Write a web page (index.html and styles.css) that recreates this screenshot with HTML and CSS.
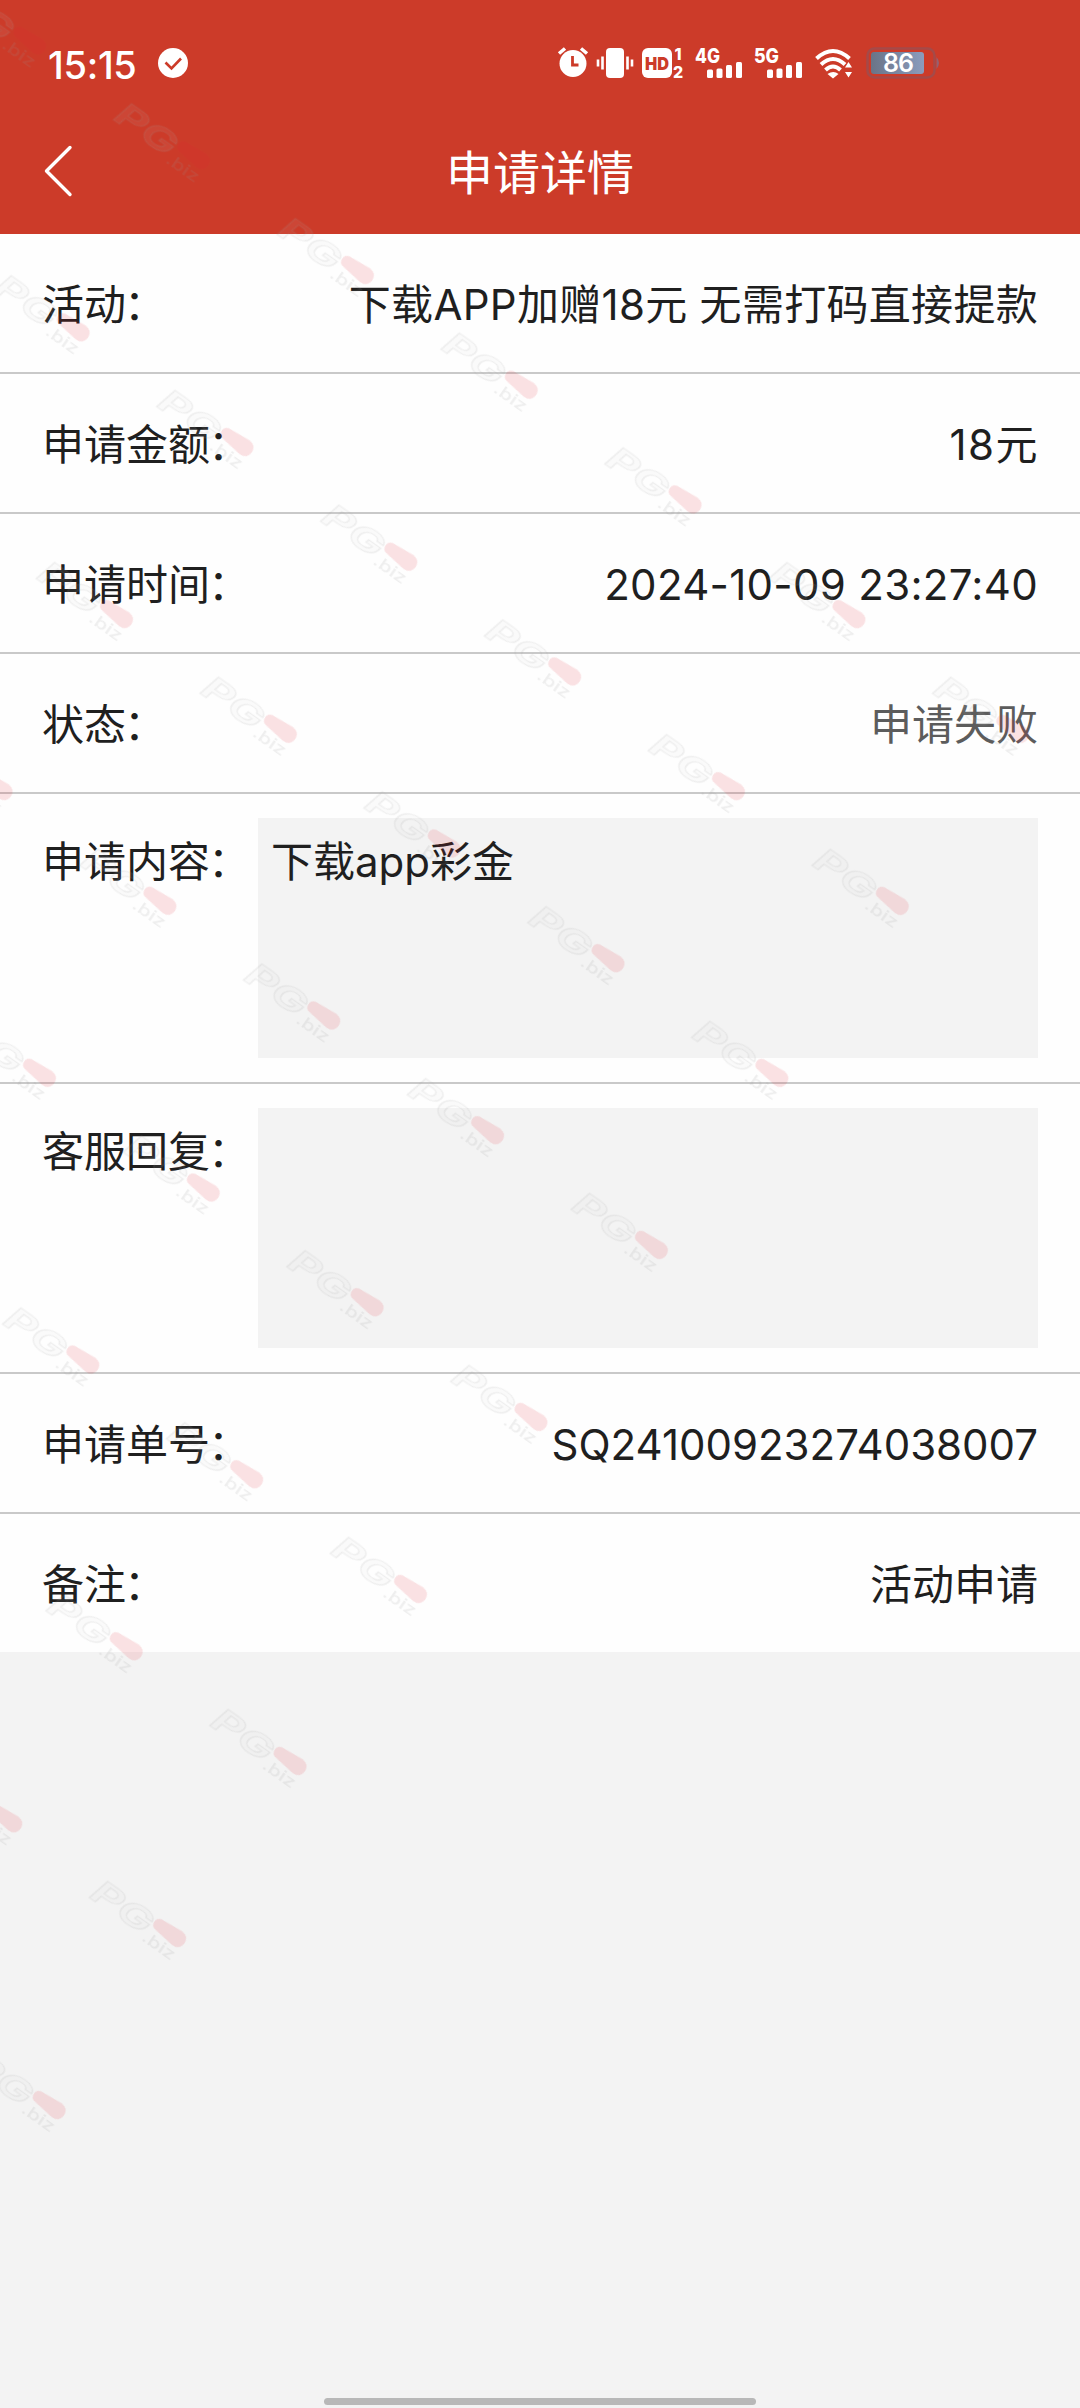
FILE: index.html
```html
<!DOCTYPE html>
<html lang="zh-CN">

<head>
    <meta charset="UTF-8">
    <meta name="viewport" content="width=device-width, initial-scale=1.0">
    <title>申请详情</title>
    <link rel="stylesheet" href="styles.css">
</head>

<body>
    <header class="header">
        <div class="status-bar">
            <span class="clock">15:15</span>
            <svg class="check" width="30" height="30" viewBox="0 0 30 30">
                <circle cx="15" cy="15" r="15" fill="#fff"/>
                <path d="M7.5 14.5l6 6 9.5-10" fill="none" stroke="#cc3b29" stroke-width="2.6"/>
            </svg>
            <!-- alarm, vibrate, HD, signal, wifi, battery -->
            <svg class="status-icons" width="384" height="36" viewBox="0 0 384 36">
                <g fill="#fff">
                    <circle cx="17" cy="18.500" r="13.500"/>
                    <path d="M3 8.500l6-5M31 8.500l-6-5" stroke="#fff" stroke-width="3.500"/>
                    <path d="M16.500 11v9h6" fill="none" stroke="#cc3b29" stroke-width="2.800"/>
                    <rect x="50" y="3" width="18" height="30" rx="4"/>
                    <path d="M46.500 11.500v13M42 14.500v7M71.500 11.500v13M76 14.500v7" stroke="#fff" stroke-width="2.600"/>
                    <rect x="86" y="3" width="30" height="30" rx="6"/>
                </g>
                <text class="icon-hd" x="89" y="24.500" textLength="24" lengthAdjust="spacingAndGlyphs">HD</text>
                <text class="icon-sim" x="118.500" y="15">1</text>
                <text class="icon-sim" x="117" y="33">2</text>
                <text class="icon-net" x="139" y="17.500" textLength="25" lengthAdjust="spacingAndGlyphs">4G</text>
                <text class="icon-net" x="198" y="17.500" textLength="25" lengthAdjust="spacingAndGlyphs">5G</text>
                <g fill="#fff">
                    <rect x="151" y="24.500" width="6" height="8.500" rx="1.500"/>
                    <rect x="160.500" y="23.500" width="6" height="9.500" rx="1.500"/>
                    <rect x="170" y="20" width="6" height="13" rx="1.500"/>
                    <rect x="180" y="17" width="6" height="16" rx="1.500"/>
                    <rect x="211" y="24.500" width="6" height="8.500" rx="1.500"/>
                    <rect x="220.500" y="23.500" width="6" height="9.500" rx="1.500"/>
                    <rect x="230" y="20" width="6" height="13" rx="1.500"/>
                    <rect x="240" y="17" width="6" height="16" rx="1.500"/>
                    <path d="M271.500 29q6-4 11 0l-5.500 4.500z"/>
                    <path d="M289 22.500l3.500-5.500 3.500 5.500zM289 27l3.500 5.500 3.500-5.500z"/>
                </g>
                <path d="M260.500 13.500q16.500-15 33 0M265 19.500q12-11 24 0M269.500 25q7.500-7 15 0" fill="none" stroke="#fff" stroke-width="4"/>
                <defs>
                    <linearGradient id="charge">
                        <stop offset="0" stop-color="#6a7487"/>
                        <stop offset="1" stop-color="#8b9cbd"/>
                    </linearGradient>
                </defs>
                <rect x="311.500" y="3.500" width="67" height="29" rx="7" fill="none" stroke="#a54a48" stroke-width="2.500"/>
                <path d="M380.500 12q5 6 0 12z" fill="#966070"/>
                <rect x="315" y="7" width="53" height="22" rx="3" fill="url(#charge)"/>
                <text class="icon-level" x="327" y="27">86</text>
            </svg>
        </div>
        <nav class="nav-bar">
            <svg class="back" width="32" height="54" viewBox="0 0 32 54">
                <path d="M28 3.500L4.500 27 28 50.500" fill="none" stroke="#fff" stroke-width="3.400" stroke-linecap="round" stroke-linejoin="round"/>
            </svg>
            <h1 class="title">申请详情</h1>
        </nav>
    </header>

    <main class="detail">
        <div class="row"><span class="label">活动<i>：</i></span><span class="value">下载APP加赠18元 无需打码直接提款</span></div>
        <div class="row"><span class="label">申请金额<i>：</i></span><span class="value amount">18元</span></div>
        <div class="row"><span class="label">申请时间<i>：</i></span><span class="value">2024-10-09 23:27:40</span></div>
        <div class="row"><span class="label">状态<i>：</i></span><span class="failed">申请失败</span></div>
        <div class="row row-box">
            <span class="label">申请内容<i>：</i></span>
            <div class="box">下载app彩金</div>
        </div>
        <div class="row row-box">
            <span class="label">客服回复<i>：</i></span>
            <div class="box"></div>
        </div>
        <div class="row"><span class="label">申请单号<i>：</i></span><span>SQ24100923274038007</span></div>
        <div class="row"><span class="label">备注<i>：</i></span><span>活动申请</span></div>
    </main>

    <div class="home-bar"></div>

    <!-- tiled watermark -->
    <svg class="watermark" width="1080" height="2408" viewBox="0 0 1080 2408">
        <defs>
            <pattern id="mark" width="200" height="210" patternUnits="userSpaceOnUse">
                <text class="mark-name" x="63" y="123" textLength="67" lengthAdjust="spacingAndGlyphs">PG</text>
                <text class="mark-biz" x="130" y="128" textLength="37" lengthAdjust="spacingAndGlyphs">.biz</text>
                <path class="mark-pill" transform="rotate(-5 150 105)" d="M136 98q-5 1-5 6 0 5 5 6l22 5q9 1 10-8 0-8-8-9z"/>
            </pattern>
        </defs>
        <g transform="rotate(35) translate(-102.300 -89.700)">
            <rect width="1400" height="1890" fill="url(#mark)"/>
        </g>
    </svg>
</body>

</html>
```
FILE: styles.css
```css
* {
    margin: 0;
    padding: 0;
    box-sizing: border-box;
}
body {
    position: relative;
    height: 2408px;
    overflow: hidden;
    background: #f3f3f3;
    color: #1f1f1f;
    font-family: Inter, "Noto Sans CJK SC", sans-serif;
    font-size: 42px;
    line-height: 60px;
}
.header {
    height: 234px;
    background: #cc3b29;
    color: #fff;
}
.status-bar {
    display: flex;
    align-items: center;
    height: 108px;
    padding: 18px 140px 0 48px;
}
.clock {
    width: 110px;
    padding-top: 3px;
    font-size: 38px;
    font-weight: 500;
    letter-spacing: -0.3px;
}
.status-icons {
    margin-left: auto;
    overflow: visible;
}
.icon-hd {
    font-size: 18px;
    font-weight: 900;
    fill: #cc3b29;
}
.icon-sim {
    font-size: 16px;
    font-weight: 800;
    fill: #fff;
}
.icon-net {
    font-size: 20px;
    font-weight: 800;
    fill: #fff;
}
.icon-level {
    font-size: 25px;
    font-weight: 600;
    letter-spacing: -1px;
    fill: #fff;
}
.nav-bar {
    display: grid;
    grid-template-columns: 120px 1fr 120px;
    align-items: center;
    height: 126px;
}
.back {
    margin-left: 42px;
}
.title {
    padding-top: 4px;
    font-size: 47px;
    font-weight: 400;
    text-align: center;
}
.detail {
    background: #fefefe;
}
.row {
    display: flex;
    justify-content: space-between;
    align-items: center;
    height: 140px;
    padding: 4px 42px 0;
    border-bottom: 2px solid #c9c9c9;
}
.row:last-child {
    height: 138px;
    border-bottom: none;
}
.label i {
    margin-left: -2px;
    font-style: normal;
}
.value {
    letter-spacing: 0.3px;
}
.amount {
    letter-spacing: 1.5px;
    margin-right: -1px;
}
.failed {
    color: #5c5c5c;
}
.row-box {
    align-items: flex-start;
    height: 290px;
    padding-top: 24px;
}
.row-box .label {
    padding-top: 14px;
}
.box {
    width: 780px;
    height: 240px;
    padding: 14px 13px;
    background: #f3f3f3;
}
.home-bar {
    position: absolute;
    left: 324px;
    bottom: 3px;
    width: 432px;
    height: 7px;
    border-radius: 4px;
    background: #b8b8b8;
}
.watermark {
    position: absolute;
    top: 0;
    left: 0;
    pointer-events: none;
}
.mark-name {
    font-size: 32px;
    font-weight: 700;
    font-style: italic;
    fill: rgba(200, 200, 200, 0.08);
    stroke: rgba(150, 150, 150, 0.13);
    stroke-width: 1.2px;
}
.mark-biz {
    font-size: 16px;
    font-weight: 500;
    fill: rgba(150, 150, 150, 0.15);
}
.mark-pill {
    fill: rgba(225, 30, 50, 0.13);
}
```
